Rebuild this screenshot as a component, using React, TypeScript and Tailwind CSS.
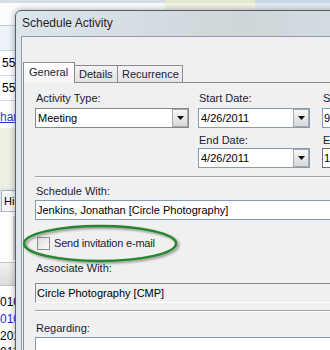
import type { ReactNode } from "react";

const FONT = "font-['Liberation_Sans',Arial,sans-serif]";

function DropButton() {
  return (
    <div className="flex h-full w-[16px] shrink-0 items-center justify-center border border-[#a9a9a9] bg-gradient-to-b from-[#f7f7f7] to-[#d9d9d9]">
      <svg width="7" height="4" viewBox="0 0 7 4">
        <path d="M0 0h7L3.5 4z" fill="#111" />
      </svg>
    </div>
  );
}

function Combo({ value, className }: { value: string; className: string }) {
  return (
    <div className={`flex h-[20px] border bg-white ${className}`}>
      <span className="flex-1 truncate pl-[2px] text-[11px] leading-[18px] text-black">
        {value}
      </span>
      <DropButton />
    </div>
  );
}

function Label({ children, className = "" }: { children: ReactNode; className?: string }) {
  return (
    <div className={`whitespace-nowrap pl-px text-[11px] leading-[13px] text-[#1b1b35] ${className}`}>
      {children}
    </div>
  );
}

function TextBox({ value, className }: { value: string; className: string }) {
  return (
    <div className={`h-[20px] whitespace-nowrap pl-px text-[11px] leading-[18px] text-black ${className}`}>
      {value}
    </div>
  );
}

function Separator({ className }: { className: string }) {
  return (
    <div className={className}>
      <div className="h-px bg-[#a0a0a0]" />
      <div className="h-px bg-white" />
    </div>
  );
}

function BackgroundApp() {
  return (
    <div className="flex w-full flex-col text-[12px] text-black">
      <div className="flex h-[3px]">
        <div className="w-[165px] bg-[#d6dde5]" />
        <div className="w-[90px] bg-[#e4e9cf]" />
        <div className="flex-1 bg-[#c9d6e4]" />
      </div>
      <div className="flex h-[22px]">
        <div className="w-[165px] bg-[#fbfcfd]" />
        <div className="w-[90px] bg-[#f3f4e3]" />
        <div className="flex-1 bg-[#e4edf6]" />
      </div>
      <div className="h-px bg-[#b9cade]" />
      <div className="h-[24px] bg-[#edf3f9]" />
      <div className="h-px bg-[#c8d6e5]" />
      <div className="h-[25px] border-b border-[#c8d6e5] bg-white pl-[2px] leading-[24px]">555-0142</div>
      <div className="h-[25px] border-b border-[#c8d6e5] bg-white pl-[2px] leading-[24px]">555-0187</div>
      <div className="h-[27px] bg-white leading-[32px]">
        <span className="text-[#1d3fd8] underline">hart@circlephoto.com</span>
      </div>
      <div className="h-[60px] bg-[#eef0e3]" />
      <div className="flex h-[24px] items-end border-b border-[#b8bcc2] bg-[#e3e7ec] pl-px">
        <div className="h-[21px] rounded-t-[2px] border border-b-0 border-[#a6acb3] bg-[#f4f6f8] px-[2px] text-[11px] leading-[20px]">
          History
        </div>
      </div>
      <div className="flex h-[50px] justify-end bg-white pr-[313px]">
        <div className="mt-[4px] h-[44px] w-[4px] bg-[#d4d4d4]" />
      </div>
      <div className="h-[24px] border-y border-[#c4c4c4] bg-gradient-to-b from-[#f2f2f2] to-[#dcdcdc]" />
      <div className="h-[8px] bg-white" />
      <div className="h-[17px] bg-white leading-[17px]">010 Call</div>
      <div className="h-[17px] bg-white leading-[17px] text-[#1a2fd0]">010 Meeting</div>
      <div className="h-[17px] bg-white leading-[17px]">2011 Call</div>
      <div className="h-[17px] bg-white leading-[14px]">011 To-do</div>
    </div>
  );
}

function InviteCircle() {
  return (
    <svg
      className="pointer-events-none absolute left-[20px] top-[220px]"
      width="166"
      height="50"
      viewBox="0 0 166 50"
    >
      <defs>
        <filter id="soft" x="-10%" y="-30%" width="120%" height="160%">
          <feGaussianBlur stdDeviation="1.3" />
        </filter>
      </defs>
      <ellipse cx="82" cy="25" rx="76" ry="17.5" fill="none" stroke="rgba(0,0,0,0.35)" strokeWidth="3" filter="url(#soft)" />
      <ellipse cx="80" cy="23.5" rx="76" ry="17.5" fill="none" stroke="#23892a" strokeWidth="2.4" />
    </svg>
  );
}

export default function App() {
  return (
    <div className={`relative h-[350px] w-[330px] overflow-hidden bg-white ${FONT}`}>
      <BackgroundApp />

      <div className="absolute left-[15px] top-[10px] flex h-[360px] w-[460px] flex-col rounded-tl-[6px] border border-[#55606c] bg-gradient-to-r from-[#dde5ed] via-[#cfd6d9] to-[#dbe6f1] pl-[5px] shadow-[0_0_7px_rgba(0,0,0,0.35)]">
        <div className="h-[25px] pl-px text-[12px] leading-[25px] text-[#1e1e1e]">
          Schedule Activity
        </div>

        <div className="flex flex-1 flex-col border-l border-t border-[#8d9cae] bg-[#f0f0f0] pt-[25px]">
          <div className="relative z-10 ml-px flex h-[20px] items-end text-[11px] text-[#1b1b35]">
            <div className="-mb-px h-[21px] w-[52px] border border-b-0 border-[#898c95] bg-gradient-to-b from-white to-[#f6f6f6] pl-[5px] leading-[19px]">
              General
            </div>
            <div className="h-[17px] w-[43px] border-r border-t border-[#898c95] bg-gradient-to-b from-[#f3f3f3] to-[#e3e3e3] pl-[4px] leading-[16px]">
              Details
            </div>
            <div className="h-[17px] w-[65px] border-r border-t border-[#898c95] bg-gradient-to-b from-[#f3f3f3] to-[#e3e3e3] pl-[4px] leading-[16px]">
              Recurrence
            </div>
          </div>

          <div className="ml-px flex flex-1 flex-col border-l border-t border-[#898c95] bg-[#f0f0f0] pl-[11px]">
            <div className="mt-[9px] flex">
              <div className="w-[154px] shrink-0">
                <Label>Activity Type:</Label>
                <Combo value="Meeting" className="mt-[3px] border-[#828790]" />
              </div>
              <div className="ml-[9px] w-[112px] shrink-0">
                <Label className="pl-[2px]">Start Date:</Label>
                <Combo value="4/26/2011" className="mt-[3px] border-[#7f9db9]" />
                <Label className="mt-[6px] pl-[2px]">End Date:</Label>
                <Combo value="4/26/2011" className="mt-px border-[#7f9db9]" />
              </div>
              <div className="ml-[12px] w-[100px] shrink-0">
                <Label className="pl-[2px]">Start Time:</Label>
                <TextBox value="9:00 AM" className="mt-[3px] border border-[#7f9db9] bg-white" />
                <Label className="mt-[6px] pl-[2px]">End Time:</Label>
                <TextBox value="10:00 AM" className="mt-px border border-[#6e6e6e] bg-white" />
              </div>
            </div>

            <Separator className="mt-[8px]" />

            <Label className="mt-[7px]">Schedule With:</Label>
            <TextBox
              value="Jenkins, Jonathan [Circle Photography]"
              className="mt-[2px] border border-[#7f9db9] bg-white"
            />

            <div className="ml-[2px] mt-[17px] flex h-[13px] items-center">
              <div className="h-[13px] w-[13px] border border-[#8e8f8f] bg-gradient-to-br from-[#dcdcdc] to-[#fbfbfb] p-[2px]">
                <div className="h-full w-full bg-gradient-to-br from-[#e2e2e2] to-[#f6f6f6]" />
              </div>
              <span className="ml-[4px] whitespace-nowrap text-[11px] leading-[13px] tracking-[-0.2px] text-[#1b1b35]">
                Send invitation e-mail
              </span>
            </div>

            <Label className="mt-[12px]">Associate With:</Label>
            <TextBox
              value="Circle Photography [CMP]"
              className="mt-[8px] border border-b-white border-l-[#8a8a8a] border-r-white border-t-[#8a8a8a] bg-[#f0f0f0]"
            />

            <Separator className="mt-[7px]" />

            <Label className="mt-[10px]">Regarding:</Label>
            <div className="mt-[2px] h-[40px] border border-[#7f9db9] bg-white" />
          </div>
        </div>
      </div>

      <InviteCircle />
    </div>
  );
}
